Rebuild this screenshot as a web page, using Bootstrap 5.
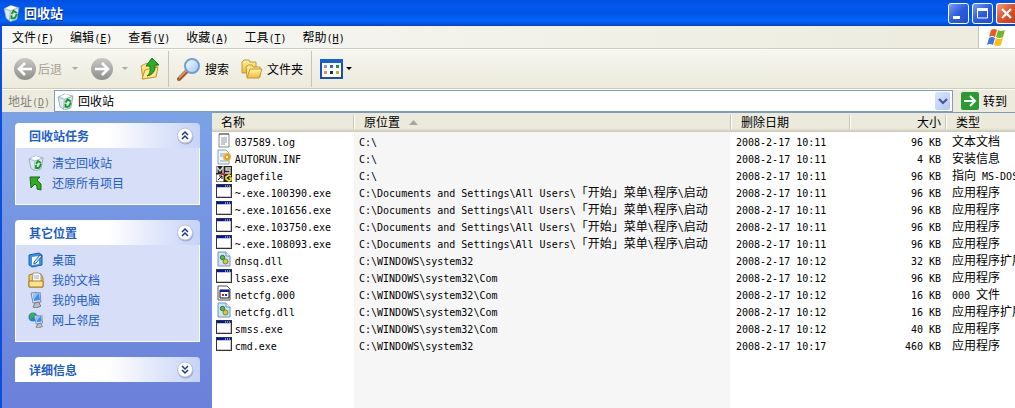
<!DOCTYPE html>
<html lang="zh-CN">
<head>
<meta charset="utf-8">
<meta name="viewport" content="width=device-width, initial-scale=1">
<title>回收站</title>
<link href="https://cdn.jsdelivr.net/npm/bootstrap@5.3.0/dist/css/bootstrap.min.css" rel="stylesheet">
<style>
html, body { height: 100%; }
body { font: 12px/16px "Noto Sans CJK SC", sans-serif; color: #000; background: #fff; overflow: hidden; }
.xp-window { height: 100vh; border-left: 2px solid #0a50dc; }
.xp-title { height: 26px; margin-left: -2px; padding-left: 3px; color: #fff; background: linear-gradient(#0050e0, #0458ee 25%, #0054e3 50%, #0464fb 80%, #0044c8); }
.xp-title h1 { font-size: 13px; line-height: 16px; font-weight: 700; margin: 0; text-shadow: 1px 1px #0a2f8c; }
.cap-group { gap: 3px; }
.cap-btn { width: 21px; height: 21px; padding: 0; border: 1px solid #fff; border-radius: 3px; background: linear-gradient(135deg, #7c9df5, #2a5be0 50%, #1f4fd0); display: flex; }
.cap-btn.close-btn { background: linear-gradient(135deg, #f0a088, #e0512c 50%, #c43c18); border-right: 0; border-radius: 3px 0 0 3px; width: 19px; }
.xp-menu { height: 23px; background: linear-gradient(90deg, #f8f8f6, #ecebdd); border-bottom: 1px solid #d2cfbc; }
.menu-items { padding-left: 10px; }
.xp-menu button, .tool-btn { border: 0; padding: 0; background: none; color: #000; white-space: nowrap; }
.lat { font: 10px/10px "DejaVu Sans Mono", monospace; white-space: pre; }
.flag-box { width: 37px; background: #fff; border-left: 1px solid #c8c5b2; }
.xp-tools { height: 40px; background: linear-gradient(#f6f6f0, #eceadb); border-top: 1px solid #fff; border-bottom: 1px solid #cfccb8; }
.tool-btn { display: flex; align-items: center; }
.tool-btn:disabled { color: #a3a29a; }
.tool-sep { width: 1px; height: 36px; background: #c9c5af; }
.xp-addr { height: 23px; background: #edebde; border-top: 1px solid #fff; }
.xp-addr label { color: #85837a; padding: 0 4px 0 6px; }
.addr-box { height: 22px; border: 1px solid #7f9db9; background: #fff; min-width: 0; padding: 0 2px; }
.addr-box input { border: 0; outline: 0; padding: 0; min-width: 0; color: #000; }
.drop-btn { width: 15px; height: 18px; border: 0; border-radius: 2px; padding: 0; background: linear-gradient(135deg, #dbe5fd, #b4c7f5); display: flex; }
.side-pane { width: 210px; background: linear-gradient(#7ba2e7, #6b80da); padding: 11px 12px 0 13px; }
.task-box { margin-bottom: 15px; }
.task-head { height: 25px; padding: 0 6px 0 14px; border-radius: 4px 4px 0 0; background: linear-gradient(90deg, #fff 50%, #c6d3f7); }
.task-head h2 { font-size: 12px; line-height: 16px; font-weight: 700; color: #215dc6; margin: 0; }
.task-head button { border: 0; padding: 0; background: none; display: flex; }
.task-body { border: 1px solid #fff; border-top: 0; background: #d6dff7; padding: 5px 12px 11px; margin: 0; }
.task-body li { height: 20px; }
.task-body a { color: #215dc6; text-decoration: none; }
.list-pane { min-width: 0; border-top: 1px solid #7f9db9; background: linear-gradient(90deg, #fff 142px, #f6f6f6 142px, #f6f6f6 518px, #fff 518px); }
.file-table { table-layout: fixed; width: 100%; border-collapse: collapse; white-space: nowrap; }
.file-table th { height: 19px; padding: 0 0 1px 9px; font-weight: 400; background: linear-gradient(#ebeadb 80%, #cbc7b8); }
.file-table th span.cell { display: block; height: 14px; line-height: 14px; }
.file-table th + th .cell { border-left: 1px solid #c7c5b2; margin-left: -9px; padding-left: 10px; box-shadow: inset 1px 0 #fff; }
.file-table td { height: 17px; line-height: 17px; padding: 0 0 0 6px; overflow: hidden; }
.file-table td:first-child { padding-left: 4px; }
.file-table td:last-child { padding-left: 7px; }
.file-table .num { text-align: right; padding-right: 4px; }
svg { display: block; flex: none; }
.file-table svg { display: inline-block; vertical-align: top; }
</style>
</head>
<body>
<svg width="0" height="0" class="position-absolute" aria-hidden="true">
<defs>
<linearGradient id="gb" x2="1" y2="1"><stop stop-color="#fff"/><stop offset="1" stop-color="#9cc3ec"/></linearGradient>
<linearGradient id="gg" x2="0" y2="1"><stop stop-color="#c8c8c6"/><stop offset="1" stop-color="#8e8e8c"/></linearGradient>
<linearGradient id="gf" x2="0" y2="1"><stop stop-color="#fff3a6"/><stop offset="1" stop-color="#eebb3c"/></linearGradient>
</defs>
<symbol id="bin" viewBox="0 0 16 16"><path d="M1 4l6-3 8 2-2 11-6 2-4-3z" fill="#dceaf2" stroke="#84a2b4" stroke-width=".8"/><path d="M1 4l6 2 8-3M7 6l-1 9" fill="none" stroke="#9ab4c4" stroke-width=".8"/><path d="M3 3l5-2 5 2-6 2z" fill="#fff"/><path d="M8 9l2-3 3 2M13 9l-2 4M8 10v3h3" fill="none" stroke="#159a20" stroke-width="1.8"/></symbol>
<symbol id="exe" viewBox="0 0 16 14"><path d="M0 0h16v14H0z" fill="#333"/><path d="M1 1h14v12H1z" fill="#c8c8c8"/><path d="M1 4h13v8H1z" fill="#fff"/><path d="M1 1h14v2H1z" fill="#0018a8"/><path d="M9 1.500h1v1H9zM11 1.500h1v1h-1zM13 1.500h1v1h-1z" fill="#fff"/></symbol>
<symbol id="log" viewBox="0 0 16 16"><path d="M3 2h10v13H3z" fill="#fff" stroke="#888"/><path d="M4 1v2M6 1v2M8 1v2M10 1v2M12 1v2" stroke="#555"/><path d="M5 6h6M5 8h6M5 10h6M5 12h4" stroke="#89a"/></symbol>
<symbol id="inf" viewBox="0 0 16 16"><path d="M2 1h8l3 3v11H2z" fill="#eef5ff" stroke="#89a0bd"/><path d="M4 5h5M4 7h3M4 12h7" stroke="#7fa8dd"/><circle cx="11" cy="8" r="4" fill="#f0b83c"/><path d="M11 4l4 3-3 5-4-3z" fill="#e29a24"/><circle cx="11" cy="8" r="1.200" fill="#fff6d8"/></symbol>
<symbol id="dos" viewBox="0 0 16 16"><path d="M0 0h16v16H0z" fill="#222"/><path d="M1 7V1l3 4 3-4v6M15 2h-5v2h4v3h-5" fill="none" stroke="#ddd" stroke-width="1.300"/><path d="M0 8h8v8H0z" fill="#fff" stroke="#222"/><path d="M2 14l4-4M3 10h3v3" fill="none" stroke="#111"/><path d="M5 7h4v2H5z" fill="#e22"/><path d="M15 10l-2-1-3 2v2l3 2 2-1v-2h-2" fill="none" stroke="#f5df22" stroke-width="1.600"/></symbol>
<symbol id="dll" viewBox="0 0 16 16"><path d="M2 1h8l4 4v10H2z" fill="#cfe4fb" stroke="#7194c4"/><path d="M10 1v4h4" fill="#fff" stroke="#7194c4"/><circle cx="6.500" cy="6.500" r="2.200" fill="#5bb84c" stroke="#287a28"/><circle cx="9.500" cy="10.500" r="2.500" fill="#d6c73c" stroke="#718b28"/></symbol>
<symbol id="unk" viewBox="0 0 16 16"><path d="M2 1h9l3 3v11H2z" fill="#fff" stroke="#555"/><path d="M4 5h9v8H4z" fill="#fff" stroke="#111"/><path d="M4 5h9v2H4z" fill="#1020a0"/><path d="M6 9h2v2H6z" fill="#d22"/><path d="M9 9h2v2H9z" fill="#22c"/></symbol>
<symbol id="up2" viewBox="0 0 18 18"><circle cx="9.500" cy="9.500" r="8" fill="#7f8cc0" opacity=".6"/><circle cx="9" cy="8.500" r="7.500" fill="#fff" stroke="#b8c2e0"/><path d="M6 8l3-3 3 3M6 12l3-3 3 3" fill="none" stroke="#1c3a94" stroke-width="1.500"/></symbol>
<symbol id="folder" viewBox="0 0 22 20"><path d="M1 3l2-2h5l1 2h6v11H1z" fill="url(#gf)" stroke="#c5962e"/><path d="M5 8l2-2h4l1 2h7v10H6z" fill="#ffe88a" stroke="#c5962e"/><path d="M6 19l3-9h12l-3 9z" fill="url(#gf)" stroke="#c5962e"/></symbol>
<symbol id="pc" viewBox="0 0 16 16"><path d="M3 1l9-1 1 10-8 1z" fill="#d8e2ef" stroke="#7788a8"/><path d="M5 2l6-1 1 7-6 1z" fill="#3f8eea"/><path d="M5 2l6-1-5 6z" fill="#8ec4fa"/><path d="M7 11l4-1 1 3 1 1-5 2-3-1z" fill="#b8bfcc" stroke="#778"/></symbol>
</svg>

<div class="xp-window d-flex flex-column">
<header class="xp-title d-flex align-items-center">
<svg width="17" height="18"><use href="#bin"/></svg>
<h1 class="flex-grow-1 ps-1">回收站</h1>
<div class="d-flex flex-shrink-0 cap-group">
<button class="cap-btn" aria-label="最小化"><svg width="19" height="19"><path d="M4 12h7v3H4z" fill="#fff"/></svg></button>
<button class="cap-btn" aria-label="最大化"><svg width="19" height="19"><path d="M4.500 5h10v9h-10z" fill="none" stroke="#fff"/><path d="M4 4h11v3H4z" fill="#fff"/></svg></button>
<button class="cap-btn close-btn" aria-label="关闭"><svg width="18" height="19"><path d="M5 5l9 9M14 5l-9 9" stroke="#fff" stroke-width="2.400"/></svg></button>
</div>
</header>
<nav class="xp-menu d-flex flex-shrink-0">
<div class="d-flex flex-grow-1 align-items-center gap-3 menu-items">
<button>文件<span class="lat">(<u>F</u>)</span></button>
<button>编辑<span class="lat">(<u>E</u>)</span></button>
<button>查看<span class="lat">(<u>V</u>)</span></button>
<button>收藏<span class="lat">(<u>A</u>)</span></button>
<button>工具<span class="lat">(<u>T</u>)</span></button>
<button>帮助<span class="lat">(<u>H</u>)</span></button>
</div>
<div class="flag-box d-flex align-items-center justify-content-center">
<svg width="20" height="19" viewBox="0 0 20 19"><path d="M4 2q3-2 6 0L8 9Q5 7 2 9z" fill="#ee5a24"/><path d="M11 2q3 2 7 0l-2 7q-3 2-7 0z" fill="#6cba2c"/><path d="M2 10q3-2 6 0l-2 7q-3-2-6 0z" fill="#3b78dc"/><path d="M9 10q3 2 7 0l-2 7q-3 2-7 0z" fill="#fabe18"/></svg>
</div>
</nav>
<div class="xp-tools d-flex align-items-center flex-shrink-0" role="toolbar">
<button class="tool-btn ms-2 ps-1" disabled><svg width="24" height="24"><circle cx="11" cy="12" r="11" fill="url(#gg)"/><path d="M18 12H6M11 6l-6 6 6 6" fill="none" stroke="#fff" stroke-width="2.600"/></svg><span>后退</span><svg width="28" height="8"><path d="M10 2h6l-3 3z" fill="#aaa"/></svg></button>
<button class="tool-btn" disabled aria-label="前进"><svg width="24" height="24"><circle cx="12" cy="12" r="11" fill="url(#gg)"/><path d="M5 12h12M12 6l6 6-6 6" fill="none" stroke="#fff" stroke-width="2.600"/></svg><svg width="26" height="8"><path d="M8 2h6l-3 3z" fill="#aaa"/></svg></button>
<button class="tool-btn" aria-label="向上"><svg width="20" height="24" viewBox="0 0 20 24"><path d="M1 9l6-3 2 2 8-2-1 13-13 3z" fill="url(#gf)" stroke="#c5962e"/><path d="M2 22l3-9 13-3-2 10z" fill="#ffe98d" stroke="#c5962e"/><path d="M7 19q4-2 3-10H6l6-8 7 7h-4q1 9-8 11z" fill="#2fae2b" stroke="#107517"/></svg></button>
<div class="tool-sep mx-2"></div>
<button class="tool-btn"><svg width="24" height="24"><path d="M2 22l8-8" stroke="#a45c2c" stroke-width="4" stroke-linecap="round"/><path d="M2 21l8-8" stroke="#e5a06c" stroke-width="1.500"/><circle cx="15" cy="9" r="7" fill="url(#gb)" stroke="#6d9ed8" stroke-width="2"/></svg><span class="ms-1">搜索</span></button>
<button class="tool-btn ms-2 ps-1"><svg width="22" height="20"><use href="#folder"/></svg><span class="ms-1">文件夹</span></button>
<div class="tool-sep ms-2 me-2"></div>
<button class="tool-btn" aria-label="查看方式"><svg width="34" height="20"><path d="M1 1h21v18H1z" fill="#fff" stroke="#1550b8" stroke-width="2"/><path d="M0 0h23v4H0z" fill="#1760d8"/><path d="M4 6h3v3H4z" fill="#99b"/><path d="M10 6h3v3h-3z" fill="#36c"/><path d="M16 6h3v3h-3z" fill="#292"/><path d="M4 12h3v3H4z" fill="#e86"/><path d="M10 12h3v3h-3z" fill="#135"/><path d="M16 12h3v3h-3z" fill="#ca2"/><path d="M26 8h6l-3 3z"/></svg></button>
</div>
<div class="xp-addr d-flex align-items-center flex-shrink-0">
<label for="addr">地址<span class="lat">(<u>D</u>)</span></label>
<div class="addr-box d-flex flex-grow-1 align-items-center"><svg width="17" height="17"><use href="#bin"/></svg><input id="addr" class="flex-grow-1 ms-1" value="回收站"><button class="drop-btn" aria-label="展开地址"><svg width="15" height="18"><path d="M4 7l4 4 4-4" fill="none" stroke="#3c5a94" stroke-width="2"/></svg></button></div>
<button class="tool-btn ms-2 me-1 pe-1"><svg width="18" height="18"><rect width="18" height="18" rx="2" fill="#2c9a34"/><path d="M3 9h11M9 4l5 5-5 5" fill="none" stroke="#fff" stroke-width="2"/></svg><span class="ps-1">转到</span></button>
</div>
<main class="d-flex flex-grow-1">
<aside class="side-pane flex-shrink-0">
<section class="task-box"><div class="task-head d-flex align-items-center justify-content-between"><h2>回收站任务</h2><button aria-label="收起"><svg width="18" height="18"><use href="#up2"/></svg></button></div>
<ul class="task-body list-unstyled">
<li class="d-flex align-items-center gap-2"><svg width="16" height="16"><use href="#bin"/></svg><a href="#">清空回收站</a></li>
<li class="d-flex align-items-center gap-2"><svg width="16" height="16"><path d="M2 2h10l-3 3 4 4v6l-4-1V11L7 9l-4 4z" fill="#34aa20" stroke="#146c10"/></svg><a href="#">还原所有项目</a></li>
</ul></section>
<section class="task-box"><div class="task-head d-flex align-items-center justify-content-between"><h2>其它位置</h2><button aria-label="收起"><svg width="18" height="18"><use href="#up2"/></svg></button></div>
<ul class="task-body list-unstyled">
<li class="d-flex align-items-center gap-2"><svg width="16" height="16"><path d="M1 3l10-2 3 2v10l-10 2-3-2z" fill="#3c94e6" stroke="#1b5eb0"/><path d="M4 5l7-1v8l-7 1z" fill="#fff"/><path d="M6 10l6-7 2 1-6 7-2 1z" fill="#dceafa" stroke="#235a9c"/></svg><a href="#">桌面</a></li>
<li class="d-flex align-items-center gap-2"><svg width="16" height="16"><path d="M1 3l3-1h9l2 4v9H1z" fill="#f5cb55" stroke="#a77a1c"/><path d="M5 1h6l2 2v8H4z" fill="#fff" stroke="#999"/><path d="M6 4h5M6 6h5" stroke="#9ab"/><path d="M1 9h14v6H1z" fill="#ffe38a" stroke="#a77a1c"/></svg><a href="#">我的文档</a></li>
<li class="d-flex align-items-center gap-2"><svg width="16" height="16"><use href="#pc"/></svg><a href="#">我的电脑</a></li>
<li class="d-flex align-items-center gap-2"><svg width="16" height="16"><circle cx="5" cy="5" r="4.500" fill="#267fd8"/><path d="M2 2q3-2 5 0l-2 4-3 1z" fill="#38b344"/><use href="#pc" x="4" y="3" width="13" height="13"/></svg><a href="#">网上邻居</a></li>
</ul></section>
<section class="task-box"><div class="task-head d-flex align-items-center justify-content-between"><h2>详细信息</h2><button aria-label="展开"><svg width="18" height="18"><circle cx="9.500" cy="9.500" r="8" fill="#7f8cc0" opacity=".6"/><circle cx="9" cy="8.500" r="7.500" fill="#fff" stroke="#b8c2e0"/><path d="M6 5l3 3 3-3M6 9l3 3 3-3" fill="none" stroke="#1c3a94" stroke-width="1.500"/></svg></button></div></section>
</aside>
<section class="list-pane flex-grow-1 overflow-hidden">
<table class="file-table">
<colgroup><col style="width:141px"><col style="width:377px"><col style="width:119px"><col style="width:96px"><col></colgroup>
<thead><tr><th><span class="cell">名称</span></th><th><span class="cell">原位置 <svg width="22" height="14"><path d="M6 10h9L10.500 5z" fill="#aca899"/></svg></span></th><th><span class="cell">删除日期</span></th><th class="num"><span class="cell">大小</span></th><th><span class="cell">类型</span></th></tr></thead>
<tbody>
<tr><td><svg width="16" height="16"><use href="#log"/></svg> <span class="lat">037589.log</span></td><td><span class="lat">C:\</span></td><td><span class="lat">2008-2-17 10:11</span></td><td class="num"><span class="lat">96 KB</span></td><td>文本文档</td></tr>
<tr><td><svg width="16" height="16"><use href="#inf"/></svg> <span class="lat">AUTORUN.INF</span></td><td><span class="lat">C:\</span></td><td><span class="lat">2008-2-17 10:11</span></td><td class="num"><span class="lat">4 KB</span></td><td>安装信息</td></tr>
<tr><td><svg width="16" height="16"><use href="#dos"/></svg> <span class="lat">pagefile</span></td><td><span class="lat">C:\</span></td><td><span class="lat">2008-2-17 10:11</span></td><td class="num"><span class="lat">96 KB</span></td><td>指向<span class="lat"> MS-DOS</span></td></tr>
<tr><td><svg width="16" height="16"><use href="#exe"/></svg> <span class="lat">~.exe.100390.exe</span></td><td><span class="lat">C:\Documents and Settings\All Users\</span>「开始」菜单<span class="lat">\</span>程序<span class="lat">\</span>启动</td><td><span class="lat">2008-2-17 10:11</span></td><td class="num"><span class="lat">96 KB</span></td><td>应用程序</td></tr>
<tr><td><svg width="16" height="16"><use href="#exe"/></svg> <span class="lat">~.exe.101656.exe</span></td><td><span class="lat">C:\Documents and Settings\All Users\</span>「开始」菜单<span class="lat">\</span>程序<span class="lat">\</span>启动</td><td><span class="lat">2008-2-17 10:11</span></td><td class="num"><span class="lat">96 KB</span></td><td>应用程序</td></tr>
<tr><td><svg width="16" height="16"><use href="#exe"/></svg> <span class="lat">~.exe.103750.exe</span></td><td><span class="lat">C:\Documents and Settings\All Users\</span>「开始」菜单<span class="lat">\</span>程序<span class="lat">\</span>启动</td><td><span class="lat">2008-2-17 10:11</span></td><td class="num"><span class="lat">96 KB</span></td><td>应用程序</td></tr>
<tr><td><svg width="16" height="16"><use href="#exe"/></svg> <span class="lat">~.exe.108093.exe</span></td><td><span class="lat">C:\Documents and Settings\All Users\</span>「开始」菜单<span class="lat">\</span>程序<span class="lat">\</span>启动</td><td><span class="lat">2008-2-17 10:11</span></td><td class="num"><span class="lat">96 KB</span></td><td>应用程序</td></tr>
<tr><td><svg width="16" height="16"><use href="#dll"/></svg> <span class="lat">dnsq.dll</span></td><td><span class="lat">C:\WINDOWS\system32</span></td><td><span class="lat">2008-2-17 10:12</span></td><td class="num"><span class="lat">32 KB</span></td><td>应用程序扩展</td></tr>
<tr><td><svg width="16" height="16"><use href="#exe"/></svg> <span class="lat">lsass.exe</span></td><td><span class="lat">C:\WINDOWS\system32\Com</span></td><td><span class="lat">2008-2-17 10:12</span></td><td class="num"><span class="lat">96 KB</span></td><td>应用程序</td></tr>
<tr><td><svg width="16" height="16"><use href="#unk"/></svg> <span class="lat">netcfg.000</span></td><td><span class="lat">C:\WINDOWS\system32\Com</span></td><td><span class="lat">2008-2-17 10:12</span></td><td class="num"><span class="lat">16 KB</span></td><td><span class="lat">000 </span>文件</td></tr>
<tr><td><svg width="16" height="16"><use href="#dll"/></svg> <span class="lat">netcfg.dll</span></td><td><span class="lat">C:\WINDOWS\system32\Com</span></td><td><span class="lat">2008-2-17 10:12</span></td><td class="num"><span class="lat">16 KB</span></td><td>应用程序扩展</td></tr>
<tr><td><svg width="16" height="16"><use href="#exe"/></svg> <span class="lat">smss.exe</span></td><td><span class="lat">C:\WINDOWS\system32\Com</span></td><td><span class="lat">2008-2-17 10:12</span></td><td class="num"><span class="lat">40 KB</span></td><td>应用程序</td></tr>
<tr><td><svg width="16" height="16"><use href="#exe"/></svg> <span class="lat">cmd.exe</span></td><td><span class="lat">C:\WINDOWS\system32</span></td><td><span class="lat">2008-2-17 10:17</span></td><td class="num"><span class="lat">460 KB</span></td><td>应用程序</td></tr>
</tbody>
</table>
</section>
</main>
</div>
<script src="https://cdn.jsdelivr.net/npm/bootstrap@5.3.0/dist/js/bootstrap.bundle.min.js"></script>
</body>
</html>
